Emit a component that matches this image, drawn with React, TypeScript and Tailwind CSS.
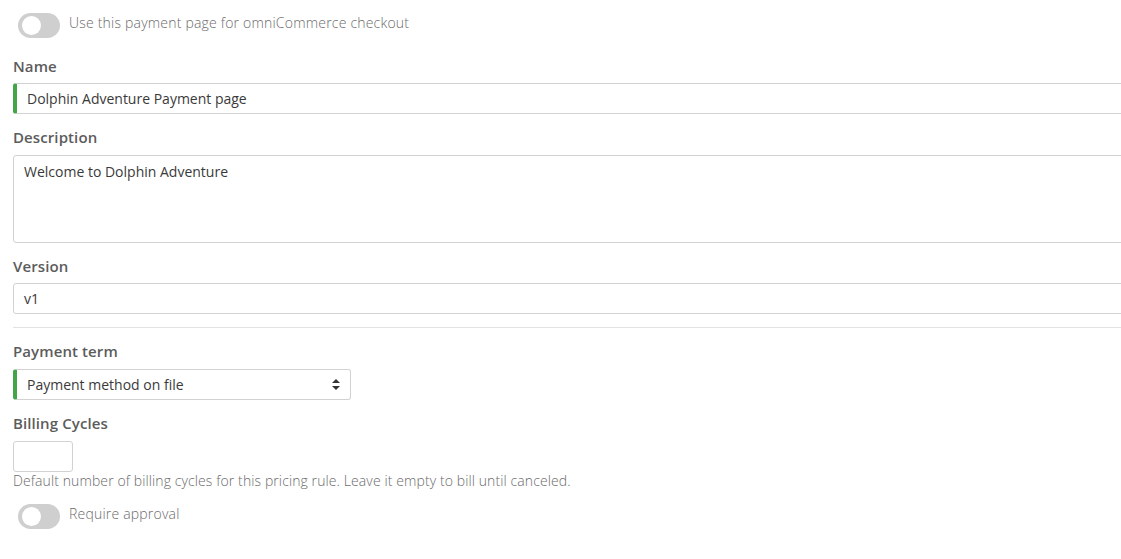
import React from "react";

function Toggle({ label }: { label: string }) {
  return (
    <div className="flex items-start ml-[5px]">
      <div className="relative w-[42px] h-[25px] rounded-full bg-[#cfcfcf] shrink-0">
        <div className="absolute left-[4px] top-[3px] w-[19px] h-[19px] rounded-full bg-white" />
      </div>
      <span className="ml-[9px] mt-[1px] text-[14px] leading-[18px] tracking-[0.2px] text-[#6b6b6b] font-light">{label}</span>
    </div>
  );
}

function Label({ children, className = "" }: { children: React.ReactNode; className?: string }) {
  return <div className={"text-[15px] leading-[20px] font-semibold tracking-[0.1px] text-[#5c5c5c] " + className}>{children}</div>;
}

export default function App() {
  return (
    <div className="w-[1121px] h-[559px] overflow-hidden bg-white" style={{ fontFamily: '"Open Sans", "Noto Sans", sans-serif' }}>
      <div className="w-[1150px] pl-[13px] pt-[13px]">
        <Toggle label="Use this payment page for omniCommerce checkout" />
        <Label className="mt-[18px]">Name</Label>
        <div className="mt-[7px] h-[31px] border border-[#d2d2d2] border-l-[4px] border-l-[#43a547] rounded-[3px] flex items-center pl-[10px] text-[14px] text-[#3a3a3a]">
          Dolphin Adventure Payment page
        </div>
        <Label className="mt-[13px]">Description</Label>
        <div className="mt-[8px] h-[88px] border border-[#d2d2d2] rounded-[3px] pl-[10px] pt-[5px] text-[14px] text-[#3a3a3a]">
          Welcome to Dolphin Adventure
        </div>
        <Label className="mt-[13px]">Version</Label>
        <div className="mt-[7px] h-[31px] border border-[#d2d2d2] rounded-[3px] flex items-center pl-[10px] text-[14px] text-[#3a3a3a]">
          v1
        </div>
        <div className="mt-[13px] h-px bg-[#e2e2e2]" />
        <Label className="mt-[13px]">Payment term</Label>
        <div className="mt-[8px] w-[338px] h-[31px] border border-[#d2d2d2] border-l-[4px] border-l-[#43a547] rounded-[3px] flex items-center justify-between pl-[10px] pr-[10px] text-[14px] text-[#3a3a3a]">
          <span>Payment method on file</span>
          <svg width="8" height="11" viewBox="0 0 8 11" fill="#333">
            <path d="M4 0 L8 4 H0 Z" />
            <path d="M4 11 L8 7 H0 Z" />
          </svg>
        </div>
        <Label className="mt-[13px]">Billing Cycles</Label>
        <div className="mt-[8px] w-[60px] h-[31px] border border-[#d2d2d2] rounded-[3px]" />
        <div className="text-[14px] leading-[18px] tracking-[0.1px] text-[#6b6b6b] font-light">
          Default number of billing cycles for this pricing rule. Leave it empty to bill until canceled.
        </div>
        <div className="mt-[14px]">
          <Toggle label="Require approval" />
        </div>
      </div>
    </div>
  );
}
